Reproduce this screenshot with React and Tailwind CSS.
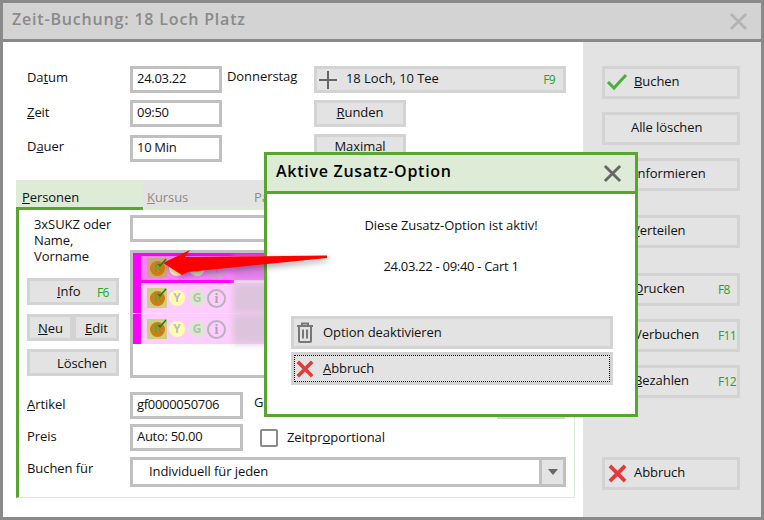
const XIcon = ({className, color = '#e23b3b', width = 4}) => (
  <svg viewBox="0 0 20 20" className={className}>
    <path d="M2 2 L18 18 M18 2 L2 18" stroke={color} strokeWidth={width} fill="none" />
  </svg>
)

const Input = ({value, className = ''}) => (
  <div className={`h-[27px] border-3 border-[#c0c0c0] bg-white pl-1 leading-[19px] tracking-[-0.3px] ${className}`}>{value}</div>
)

const Btn = ({children, className = '', hot, hotClass = 'pt-px'}) => (
  <div className={`relative flex items-center border-3 border-[#d3d3d3] bg-[#e3e3e3] ${className}`}>
    {children}
    {hot && <span className={`ml-auto w-[19px] text-[12px] tracking-[-0.6px] text-[#22a522] ${hotClass}`}>{hot}</span>}
  </div>
)

const SideBtn = ({children, hot, icon, className = '', pad = 'pl-[29px]'}) => (
  <Btn hot={hot} className={`h-[33px] w-[138px] ${className}`}>
    {icon}
    <span className={`pb-[2px] ${pad}`}>{children}</span>
  </Btn>
)

const Row = ({selected, h = 'h-[30px]'}) => (
  <div className={`flex ${h} items-center border-l-8 border-[#ff00ff] ${selected ? 'bg-[#ff80ff]' : 'bg-[#ffccff]'}`}>
    <div className={`relative ml-[6px] flex h-5 w-5 items-center justify-center ${selected ? 'bg-[#c8a878]' : 'bg-[#ccd080]'}`}>
      <div className="flex h-[15px] w-[15px] items-center justify-center rounded-full bg-[#d47a10] text-[13px] font-bold text-[#7f9a30]">R</div>
      <svg viewBox="0 0 20 20" className="absolute left-0 top-0 h-5 w-5">
        <path d="M11 6 L13 8 L19 1" stroke="#1f7a1f" strokeWidth="1.5" fill="none" />
      </svg>
    </div>
    <div className="ml-[2px] flex h-4 w-4 items-center justify-center rounded-full bg-[#ffffb0] text-[12px] font-bold text-[#bbbbbb]">Y</div>
    <div className="ml-1 flex h-4 w-4 items-center justify-center rounded-full bg-[#d5ecc8] text-[12px] font-bold text-[#bbbbbb]">G</div>
    <div className="ml-[2px] flex h-[19px] w-[19px] items-center justify-center rounded-full border-2 border-[#b5b5b5] text-[14px] font-bold text-[#aaaaaa] [font-family:'Liberation_Serif',serif]">i</div>
    <div className={`ml-[7px] h-full w-[70px] blur-[3px] ${selected ? 'bg-[#e080e8]' : 'bg-[#dcc4dc]'}`} />
  </div>
)

export default function App() {
  return (
    <div className="relative h-[520px] w-[764px] overflow-hidden text-[13px] tracking-[-0.07px] text-[#111] [font-family:'Open_Sans',sans-serif]">
      <div className="flex h-full flex-col border-3 border-[#8a8a8a]">
        <div className="flex h-[39px] shrink-0 items-center justify-between border-b-3 border-[#8a8a8a] bg-[#d3d3d3] pl-[9px] pr-[13px]">
          <span className="pb-1 text-[16px] font-semibold tracking-[0.82px] text-[#8a8a8a]">Zeit-Buchung: 18 Loch Platz</span>
          <XIcon className="h-[19px] w-[19px]" color="#b4b4b4" width={3} />
        </div>

        <div className="flex flex-1">
          {/* left form */}
          <div className="w-[580px] bg-white pt-6">
            <div className="flex pl-6">
              <span className="w-[103px] pt-[2px]">Da<u>t</u>um</span>
              <Input value="24.03.22" className="w-[92px]" />
              <span className="w-[92px] pl-[5px] pt-[1px]">Donnerstag</span>
              <Btn className="h-[27px] w-[252px]">
                <svg viewBox="0 0 18 18" className="ml-[2px] h-[18px] w-[18px]">
                  <path d="M9 0 V18 M0 9 H18" stroke="#666" strokeWidth="2" />
                </svg>
                <span className="pb-px pl-[9px]">18 Loch, 10 Tee</span>
                <span className="ml-auto pr-2 pt-px text-[12px] tracking-[-0.6px] text-[#22a522]">F9</span>
              </Btn>
            </div>
            <div className="mt-[7px] flex pl-6">
              <span className="w-[103px] pt-[3px]"><u>Z</u>eit</span>
              <Input value="09:50" className="w-[92px]" />
              <Btn className="ml-[92px] h-[27px] w-[92px] justify-center"><span className="pb-px"><u>R</u>unden</span></Btn>
            </div>
            <div className="mt-2 flex pl-6">
              <span className="w-[103px] pt-[2px]">D<u>a</u>uer</span>
              <Input value="10 Min" className="w-[92px]" />
              <Btn className="ml-[92px] -mt-px h-[27px] w-[92px] justify-center"><span className="pb-[2px]">Maximal</span></Btn>
            </div>

            {/* tabs */}
            <div className="ml-[13px] mt-[18px] flex h-[30px] w-[559px]">
              <div className="w-[127px] border-b-3 border-[#5aa532] bg-[#deebd7] pl-[6px] pt-[8px] leading-[18px]"><u>P</u>ersonen</div>
              <div className="w-[106px] border-b-3 border-[#deebd7] bg-[#e3e3e3] pl-[4px] pt-[8px] leading-[18px] text-[#8a8a8a]"><u>K</u>ursus</div>
              <div className="flex-1 border-b-3 border-[#deebd7] bg-[#e3e3e3] pl-[5px] pt-[8px] leading-[18px] text-[#8a8a8a]">Partner</div>
            </div>

            <div className="ml-[13px] h-[288px] w-[559px] border-b border-l-3 border-r border-b-[#deebd7] border-l-[#5aa532] border-r-[#deebd7]">
              <div className="flex">
                <div className="w-[111px] pl-2 pt-[6px]">
                  <div className="pl-[7px] leading-4">3xSUKZ oder<br />Name,<br />Vorname</div>
                  <Btn className="mt-[14px] h-[27px] w-[92px] pl-[27px]" hot="F6" hotClass="pt-[3px]"><span className="pt-px"><u>I</u>nfo</span></Btn>
                  <div className="mt-[9px] flex h-[27px] w-[92px] border-3 border-[#d3d3d3] bg-[#d3d3d3]">
                    <div className="w-10 bg-[#e3e3e3] pl-[8px] leading-[22px]"><u>N</u>eu</div>
                    <div className="ml-[6px] flex-1 bg-[#e3e3e3] pl-[9px] leading-[22px]"><u>E</u>dit</div>
                  </div>
                  <Btn className="mt-2 h-[27px] w-[92px] pl-[27px]"><span className="pt-[3px]">Löschen</span></Btn>
                </div>
                <div className="pt-[5px]">
                  <Input value="" className="w-[435px]" />
                  <div className="mt-2 h-[128px] w-[435px] overflow-hidden border-3 border-[#c0c0c0] bg-white">
                    <div className="h-[3px] bg-[#ff00ff]" />
                    <Row selected h="h-6" />
                    <div className="h-[3px] w-[101px] bg-[#ff00ff]" />
                    <Row />
                    <div className="h-px bg-[#f4e4f4]" />
                    <Row />
                  </div>
                </div>
              </div>

              <div className="mt-[14px] flex pl-2">
                <span className="w-[103px] pt-[3px]"><u>A</u>rtikel</span>
                <Input value="gf0000050706" className="h-[26px] w-[113px]" />
                <span className="pl-[11px] pt-[1px]">G</span>
                <div className="ml-auto mr-[9px] h-[27px] w-[68px] border-3 border-[#d3d3d3] bg-[#e3e3e3]" />
              </div>
              <div className="mt-[5px] flex pl-2">
                <span className="w-[103px] pt-[3px]">Preis</span>
                <Input value="Auto: 50.00" className="w-[113px]" />
                <div className="ml-[17px] mt-[5px] h-[18px] w-[18px] rounded-[2px] border-2 border-[#8a8a8a] bg-white" />
                <span className="pl-[9px] pt-[4px]">Zeitpr<u>o</u>portional</span>
              </div>
              <div className="mt-[6px] flex pl-2">
                <span className="w-[103px] pt-[2px]">Buchen für</span>
                <div className="flex h-[30px] w-[436px] items-center border-3 border-[#c0c0c0] bg-white pl-4">
                  Individuell für jeden
                  <div className="ml-auto flex h-full w-[24px] items-center justify-center border-l-3 border-[#c0c0c0] bg-[#e3e3e3]">
                    <svg viewBox="0 0 10 6" className="h-[6px] w-[10px]"><path d="M0 0 H10 L5 6 Z" fill="#666" /></svg>
                  </div>
                </div>
              </div>
            </div>
          </div>

          {/* right buttons */}
          <div className="flex-1 bg-[#e3e3e3] pl-[19px] pt-6">
            <SideBtn icon={
              <svg viewBox="0 0 22 18" className="absolute left-[1px] top-[4px] h-[18px] w-[22px]">
                <path d="M2 9 L8 15 L20 2" stroke="#4caf3a" strokeWidth="3" fill="none" />
              </svg>
            }><u>B</u>uchen</SideBtn>
            <SideBtn className="mt-[13px]" pad="pl-[26px]">Alle löschen</SideBtn>
            <SideBtn className="mt-[13px]"><u>I</u>nformieren</SideBtn>
            <SideBtn className="mt-6" pad="pl-[27px]"><u>V</u>erteilen</SideBtn>
            <SideBtn className="mt-[25px]" hot="F8"><u>D</u>rucken</SideBtn>
            <SideBtn className="mt-[13px]" hot="F11">Verbuchen</SideBtn>
            <SideBtn className="mt-[13px]" hot="F12"><u>B</u>ezahlen</SideBtn>
            <SideBtn className="mt-[59px]" icon={<XIcon className="absolute left-[3px] top-[4px] h-[19px] w-[19px]" />}>Abbruch</SideBtn>
          </div>
        </div>
      </div>

      {/* dialog */}
      <div className="absolute left-[264px] top-[152px] z-20 flex h-[265px] w-[374px] flex-col border-3 border-[#5aa532] bg-white">
        <div className="flex h-[39px] shrink-0 items-center justify-between border-b-3 border-[#5aa532] bg-[#deebd7] pl-[9px] pr-[13px]">
          <span className="pb-1 text-[16px] font-semibold tracking-[0.72px] text-black">Aktive Zusatz-Option</span>
          <XIcon className="h-[19px] w-[19px]" color="#666" width={3} />
        </div>
        <div className="pt-[21px] text-center leading-[20px]">Diese Zusatz-Option ist aktiv!</div>
        <div className="pt-[21px] text-center leading-[20px] tracking-[-0.3px]">24.03.22 - 09:40 - Cart 1</div>
        <div className="ml-6 mt-[40px] w-[322px]">
          <Btn className="h-[33px] w-full">
            <svg viewBox="0 0 18 21" className="ml-[2px] h-[21px] w-[18px]">
              <path d="M1 4 H17 M6 4 V1.5 H12 V4 M3 4 V19 Q3 20 4 20 H14 Q15 20 15 19 V4 M7 7.5 V16.5 M11 7.5 V16.5" stroke="#777" strokeWidth="2" fill="none" />
            </svg>
            <span className="pl-[9px]">Option deaktivieren</span>
          </Btn>
          <Btn className="mt-[3px] h-[33px] w-full">
            <XIcon className="ml-[2px] h-[18px] w-[18px]" />
            <span className="pl-[9px]"><u>A</u>bbruch</span>
            <div className="absolute inset-0 border border-dotted border-black" />
          </Btn>
        </div>
      </div>

      {/* red arrow, lies over the list and the dialog */}
      <svg viewBox="0 0 180 40" className="absolute left-[160px] top-[245px] z-30 h-10 w-[180px] drop-shadow-[2px_3px_3px_rgba(0,0,0,0.35)]">
        <path d="M3 18 L30 5 L25 12 L167 10.5 L167 13 L28 27 L22 30 Z" fill="#ff0000" />
      </svg>
    </div>
  )
}
